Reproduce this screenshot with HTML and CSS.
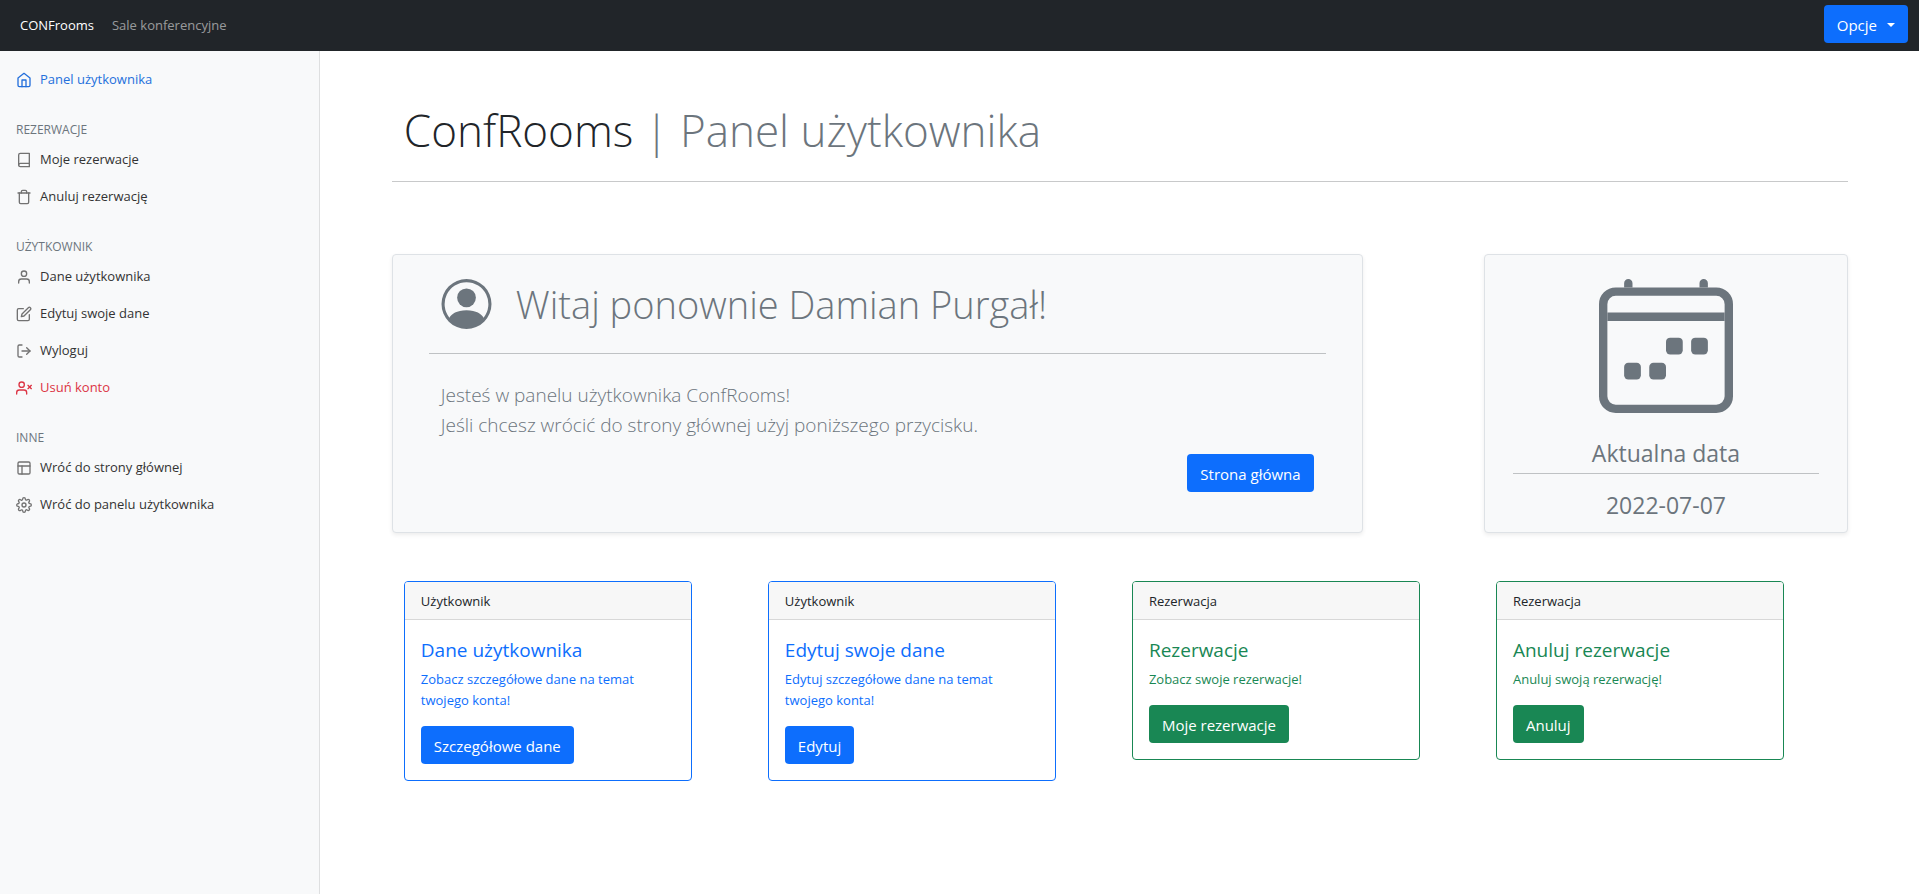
FILE: index.html
```html
<!DOCTYPE html>
<html lang="pl">
<head>
<meta charset="utf-8">
<meta name="viewport" content="width=device-width, initial-scale=1">
<title>ConfRooms | Panel użytkownika</title>
<link rel="stylesheet" href="styles.css">
</head>
<body>
<header class="navbar">
  <nav class="navbar-links">
    <a class="brand" href="#">CONFrooms</a>
    <a class="navbar-link" href="#">Sale konferencyjne</a>
  </nav>
  <button class="btn btn-primary dropdown-toggle" type="button">Opcje</button>
</header>
<div class="layout">
  <aside class="sidebar">
    <ul class="menu">
      <li><a class="menu-link active" href="#"><svg class="icon" viewBox="0 0 24 24"><path d="M3 9l9-7 9 7v11a2 2 0 0 1-2 2H5a2 2 0 0 1-2-2z"/><path d="M9 22V12h6v10"/></svg>Panel użytkownika</a></li>
    </ul>
    <h6 class="menu-heading">Rezerwacje</h6>
    <ul class="menu">
      <li><a class="menu-link" href="#"><svg class="icon" viewBox="0 0 24 24"><path d="M4 19.5A2.5 2.5 0 0 1 6.5 17H20"/><path d="M6.500 2H20v20H6.500A2.500 2.500 0 0 1 4 19.500v-15A2.500 2.500 0 0 1 6.500 2z"/></svg>Moje rezerwacje</a></li>
      <li><a class="menu-link" href="#"><svg class="icon" viewBox="0 0 24 24"><path d="M3 6h18"/><path d="M19 6v14a2 2 0 0 1-2 2H7a2 2 0 0 1-2-2V6m3 0V4a2 2 0 0 1 2-2h4a2 2 0 0 1 2 2v2"/></svg>Anuluj rezerwację</a></li>
    </ul>
    <h6 class="menu-heading">Użytkownik</h6>
    <ul class="menu">
      <li><a class="menu-link" href="#"><svg class="icon" viewBox="0 0 24 24"><path d="M20 21v-2a4 4 0 0 0-4-4H8a4 4 0 0 0-4 4v2"/><circle cx="12" cy="7" r="4"/></svg>Dane użytkownika</a></li>
      <li><a class="menu-link" href="#"><svg class="icon" viewBox="0 0 24 24"><path d="M11 4H4a2 2 0 0 0-2 2v14a2 2 0 0 0 2 2h14a2 2 0 0 0 2-2v-7"/><path d="M18.500 2.500a2.121 2.121 0 0 1 3 3L12 15l-4 1 1-4 9.500-9.500z"/></svg>Edytuj swoje dane</a></li>
      <li><a class="menu-link" href="#"><svg class="icon" viewBox="0 0 24 24"><path d="M9 21H5a2 2 0 0 1-2-2V5a2 2 0 0 1 2-2h4"/><path d="M16 17l5-5-5-5"/><path d="M21 12H9"/></svg>Wyloguj</a></li>
      <li><a class="menu-link danger" href="#"><svg class="icon" viewBox="0 0 24 24"><path d="M16 21v-2a4 4 0 0 0-4-4H5a4 4 0 0 0-4 4v2"/><circle cx="8.500" cy="7" r="4"/><path d="M18 8l5 5"/><path d="M23 8l-5 5"/></svg>Usuń konto</a></li>
    </ul>
    <h6 class="menu-heading">Inne</h6>
    <ul class="menu">
      <li><a class="menu-link" href="#"><svg class="icon" viewBox="0 0 24 24"><rect x="3" y="3" width="18" height="18" rx="2"/><path d="M3 9h18"/><path d="M9 21V9"/></svg>Wróć do strony głównej</a></li>
      <li><a class="menu-link" href="#"><svg class="icon" viewBox="0 0 24 24"><circle cx="12" cy="12" r="3"/><path d="M19.400 15a1.650 1.650 0 0 0 .33 1.820l.06.06a2 2 0 0 1 0 2.830 2 2 0 0 1-2.830 0l-.06-.06a1.650 1.650 0 0 0-1.820-.33 1.650 1.650 0 0 0-1 1.510V21a2 2 0 0 1-2 2 2 2 0 0 1-2-2v-.09A1.650 1.650 0 0 0 9 19.400a1.650 1.650 0 0 0-1.820.33l-.06.06a2 2 0 0 1-2.830 0 2 2 0 0 1 0-2.830l.06-.06a1.650 1.650 0 0 0 .33-1.820 1.650 1.650 0 0 0-1.510-1H3a2 2 0 0 1-2-2 2 2 0 0 1 2-2h.09A1.650 1.650 0 0 0 4.600 9a1.650 1.650 0 0 0-.33-1.820l-.06-.06a2 2 0 0 1 0-2.830 2 2 0 0 1 2.830 0l.06.06a1.650 1.650 0 0 0 1.820.33H9a1.650 1.650 0 0 0 1-1.510V3a2 2 0 0 1 2-2 2 2 0 0 1 2 2v.09a1.650 1.650 0 0 0 1 1.510 1.650 1.650 0 0 0 1.820-.33l.06-.06a2 2 0 0 1 2.830 0 2 2 0 0 1 0 2.830l-.06.06a1.650 1.650 0 0 0-.33 1.820V9a1.650 1.650 0 0 0 1.510 1H21a2 2 0 0 1 2 2 2 2 0 0 1-2 2h-.09a1.650 1.650 0 0 0-1.510 1z"/></svg>Wróć do panelu użytkownika</a></li>
    </ul>
  </aside>
  <main class="content">
    <h1 class="page-title">ConfRooms <span class="muted">| Panel użytkownika</span></h1>
    <div class="summary">
      <section class="panel welcome">
        <div class="welcome-head">
          <svg class="avatar" viewBox="0 0 16 16"><path d="M11 6a3 3 0 1 1-6 0 3 3 0 0 1 6 0z"/><path fill-rule="evenodd" d="M0 8a8 8 0 1 1 16 0A8 8 0 0 1 0 8zm8-7a7 7 0 0 0-5.468 11.370C3.242 11.226 4.805 10 8 10s4.757 1.225 5.468 2.370A7 7 0 0 0 8 1z"/></svg>
          <h2 class="welcome-title">Witaj ponownie Damian Purgał!</h2>
        </div>
        <div class="welcome-body">
          <p class="lead">Jesteś w panelu użytkownika ConfRooms!<br>Jeśli chcesz wrócić do strony głównej użyj poniższego przycisku.</p>
          <a class="btn btn-primary" href="#">Strona główna</a>
        </div>
      </section>
      <section class="panel date">
        <svg class="calendar" viewBox="0 0 16 16"><rect x=".5" y="1.500" width="15" height="14" rx="1.500" fill="none" stroke="currentColor"/><path d="M1 4h14v1H1zM3 1V.5a.5.5 0 0 1 1 0V1zM12 1V.5a.5.5 0 0 1 1 0V1z"/><rect x="8" y="7" width="2" height="2" rx=".5"/><rect x="11" y="7" width="2" height="2" rx=".5"/><rect x="3" y="10" width="2" height="2" rx=".5"/><rect x="6" y="10" width="2" height="2" rx=".5"/></svg>
        <h4 class="date-title">Aktualna data</h4>
        <p class="date-value">2022-07-07</p>
      </section>
    </div>
    <div class="cards">
      <article class="card blue">
        <div class="card-header">Użytkownik</div>
        <div class="card-body">
          <h5 class="card-title">Dane użytkownika</h5>
          <p class="card-text">Zobacz szczegółowe dane na temat twojego konta!</p>
          <a class="btn btn-primary" href="#">Szczegółowe dane</a>
        </div>
      </article>
      <article class="card blue">
        <div class="card-header">Użytkownik</div>
        <div class="card-body">
          <h5 class="card-title">Edytuj swoje dane</h5>
          <p class="card-text">Edytuj szczegółowe dane na temat twojego konta!</p>
          <a class="btn btn-primary" href="#">Edytuj</a>
        </div>
      </article>
      <article class="card green">
        <div class="card-header">Rezerwacja</div>
        <div class="card-body">
          <h5 class="card-title">Rezerwacje</h5>
          <p class="card-text">Zobacz swoje rezerwacje!</p>
          <a class="btn btn-success" href="#">Moje rezerwacje</a>
        </div>
      </article>
      <article class="card green">
        <div class="card-header">Rezerwacja</div>
        <div class="card-body">
          <h5 class="card-title">Anuluj rezerwacje</h5>
          <p class="card-text">Anuluj swoją rezerwację!</p>
          <a class="btn btn-success" href="#">Anuluj</a>
        </div>
      </article>
    </div>
  </main>
</div>
</body>
</html>
```
FILE: styles.css
```css
* { box-sizing: border-box; }

body {
  display: flex;
  flex-direction: column;
  min-height: 100vh;
  margin: 0;
  background: #fff;
  color: #212529;
  font: 13px/21px "Segoe UI", "Open Sans", "Noto Sans", sans-serif;
}

h1, h2, h4, h5, h6, p, ul { margin: 0; padding: 0; font-weight: 400; }
a { text-decoration: none; }

.navbar {
  display: flex;
  align-items: center;
  justify-content: space-between;
  padding: 5px 11px 8px 20px;
  background: #212529;
}
.navbar-links { display: flex; gap: 18px; padding-top: 2px; }
.brand { color: #fff; }
.navbar-link { color: rgba(255, 255, 255, .55); }

.btn {
  display: inline-block;
  padding: 7px 12px 5px;
  border: 1px solid transparent;
  border-radius: 4px;
  color: #fff;
  font: inherit;
  font-size: 15px;
  line-height: 24px;
}
.btn-primary { background: #0d6efd; }
.btn-success { background: #198754; }
.dropdown-toggle::after {
  content: "";
  display: inline-block;
  margin-left: 10px;
  vertical-align: 4px;
  border: 4px solid transparent;
  border-top-color: #fff;
  border-bottom: 0;
}

.layout {
  flex: 1;
  display: grid;
  grid-template-columns: 1fr 5fr;
}

.sidebar {
  padding-top: 10px;
  background: #f8f9fa;
  box-shadow: inset -1px 0 0 rgba(0, 0, 0, .1);
}
.menu { list-style: none; }
.menu-link {
  display: flex;
  align-items: center;
  gap: 8px;
  padding: 8px 16px;
  color: #333;
}
.icon {
  width: 16px;
  height: 16px;
  fill: none;
  stroke: #727272;
  stroke-width: 2;
  stroke-linecap: round;
  stroke-linejoin: round;
}
.active { color: #2470dc; }
.danger { color: #dc3545; }
.active .icon, .danger .icon { stroke: currentColor; }
.menu-heading {
  margin: 24px 16px 4px;
  color: #6c757d;
  font-size: 12px;
  line-height: 15px;
  text-transform: uppercase;
}

.content { padding: 50px 71px 48px 72px; }
.page-title {
  padding: 0 12px 22px;
  border-bottom: 1px solid #c8c9ca;
  font-size: 44px;
  font-weight: 300;
  line-height: 58px;
}
.muted { color: #6c757d; }

.summary {
  display: grid;
  grid-template-columns: 8fr 1fr 3fr;
  margin: 72px 0 48px;
}
.panel {
  border: 1px solid #dee2e6;
  border-radius: 4px;
  background: #f8f9fa;
  box-shadow: 0 2px 4px rgba(0, 0, 0, .075);
  color: #6c757d;
}
.welcome { padding: 24px 36px 40px; }
.welcome-head {
  display: flex;
  align-items: center;
  gap: 24px;
  padding: 0 12px 24px;
  border-bottom: 1px solid #bfc2c4;
}
.avatar { width: 51px; height: 50px; fill: currentColor; }
.welcome-title { font-size: 38px; font-weight: 300; line-height: 48px; }
.welcome-body {
  display: flex;
  flex-direction: column;
  gap: 14px;
  padding: 26px 12px 0;
}
.welcome-body .btn { align-self: flex-end; }
.lead { font-size: 19px; font-weight: 300; line-height: 30px; }

.date {
  grid-column: 3;
  display: flex;
  flex-direction: column;
  align-items: center;
  padding: 24px 28px 9px;
  text-align: center;
}
.calendar { width: 134px; height: 134px; margin-bottom: 24px; fill: currentColor; }
.date-title, .date-value { font-size: 23px; line-height: 32px; }
.date-title { align-self: stretch; padding-bottom: 4px; border-bottom: 1px solid #bfc2c4; }
.date-value { padding: 15px 0 2px; }

.cards {
  display: grid;
  grid-template-columns: repeat(4, 1fr);
  align-items: start;
  padding-left: 12px;
  margin-right: -12px;
}
.card {
  max-width: 288px;
  border: 1px solid;
  border-radius: 4px;
  overflow: hidden;
}
.blue { color: #0d6efd; }
.green { color: #198754; }
.card-header {
  padding: 9px 16px 7px;
  border-bottom: 1px solid #d8d8d8;
  background: #f7f7f7;
  color: #212529;
}
.card-body { padding: 18px 16px 16px; }
.card-title { margin-bottom: 7px; font-size: 19px; line-height: 24px; }
.card-text { margin-bottom: 15px; }
```
